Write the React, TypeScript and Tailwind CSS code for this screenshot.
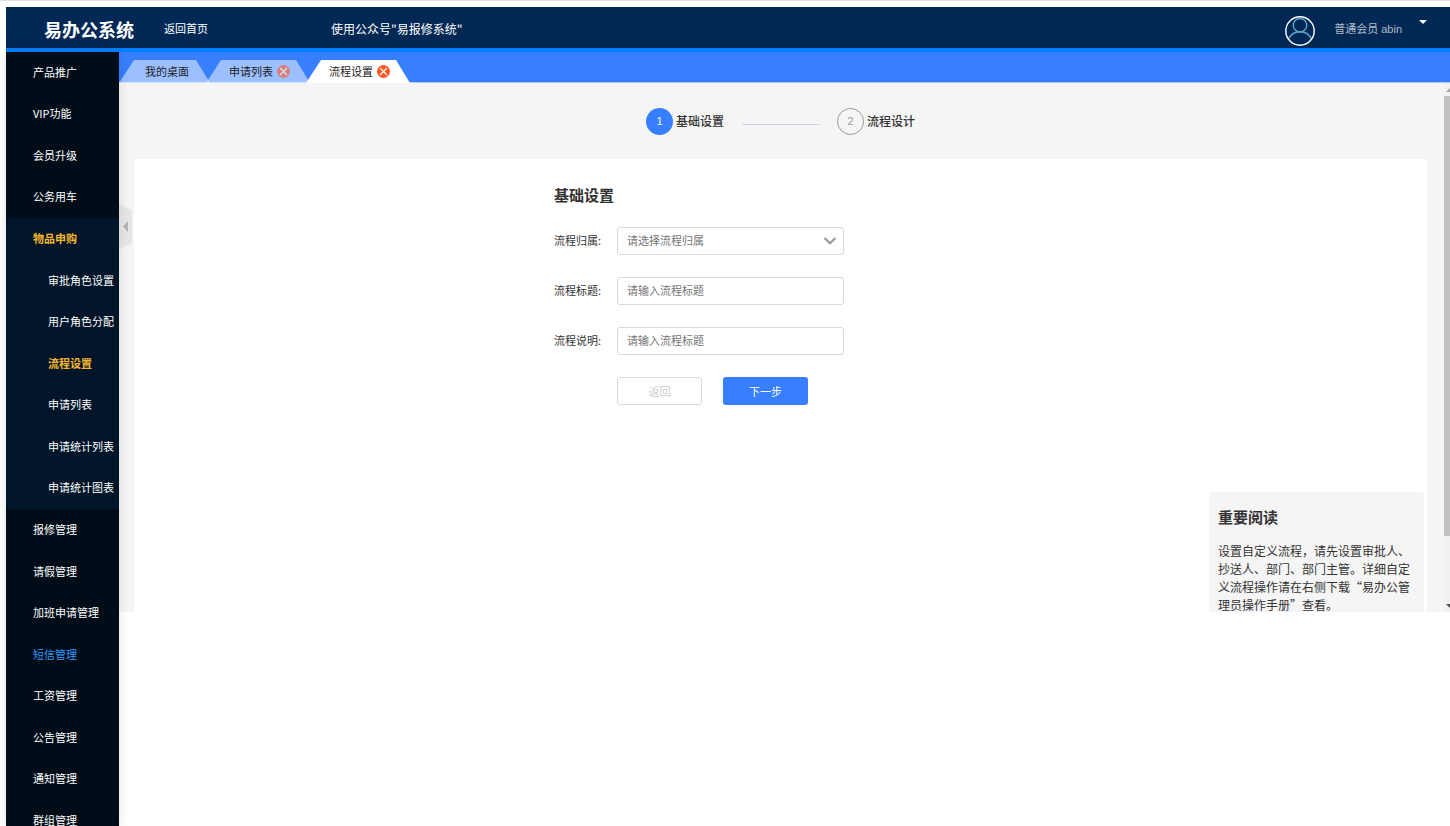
import { useState } from "react";
import clsx from "clsx";

interface MenuItem {
  label: string;
  highlight?: boolean;
  children?: string[];
}

const menu: MenuItem[] = [
  { label: "产品推广" },
  { label: "VIP功能" },
  { label: "会员升级" },
  { label: "公务用车" },
  {
    label: "物品申购",
    children: ["审批角色设置", "用户角色分配", "流程设置", "申请列表", "申请统计列表", "申请统计图表"],
  },
  { label: "报修管理" },
  { label: "请假管理" },
  { label: "加班申请管理" },
  { label: "短信管理", highlight: true },
  { label: "工资管理" },
  { label: "公告管理" },
  { label: "通知管理" },
  { label: "群组管理" },
];

const tabs = [
  { label: "我的桌面", closable: false },
  { label: "申请列表", closable: true },
  { label: "流程设置", closable: true },
];

export default function App() {
  return (
    <div className="h-screen overflow-hidden border-t border-[#dee1e6] bg-white pt-1.5 pl-1.5 font-['Noto_Sans_CJK_SC',sans-serif] text-[11px] text-[#333]">
      <Header />
      <div className="flex">
        <Sidebar />
        <main className="min-w-0 flex-1">
          <TabBar />
          <Workspace />
        </main>
      </div>
    </div>
  );
}

function Header() {
  return (
    <header className="flex h-[45px] items-center border-b-4 border-[#0080ff] bg-[#002855] pt-0.5 pl-[38px] text-white">
      <h1 className="text-lg font-bold">易办公系统</h1>
      <a href="#home" className="ml-[30px]">返回首页</a>
      <span className="ml-[123px] text-xs">使用公众号"易报修系统"</span>
      <div className="ml-auto flex h-full items-center pr-[23px]">
        <svg viewBox="0 0 30 30" className="mt-1 size-[30px]" fill="none">
          <circle cx="15" cy="9.300" r="6.800" stroke="#5fa8cf" strokeWidth="1.400" />
          <path d="M3.500 23.500C5.500 18.500 9.800 15.800 15 15.800s9.500 2.700 11.500 7.700" stroke="#5fa8cf" strokeWidth="1.400" />
          <circle cx="15" cy="15" r="14.200" stroke="#fff" strokeWidth="1.400" />
        </svg>
        <button className="flex h-full items-center gap-[17px]">
          <span className="ml-[19px] pt-0.5 font-['Liberation_Sans','Noto_Sans_CJK_SC',sans-serif] text-[#b3bdc8]">普通会员 abin</span>
          <svg viewBox="0 0 8 4" className="mb-3.5 h-1 w-2">
            <path d="M0 0h8L4 4z" fill="#fff" />
          </svg>
        </button>
      </div>
    </header>
  );
}

function Sidebar() {
  const [active, setActive] = useState("流程设置");

  return (
    <nav className="relative z-10 h-[calc(100vh-52px)] w-[113px] shrink-0 overflow-hidden bg-[#000c17] text-white shadow-[0_0_10px_rgba(0,0,0,0.12)]">
      <ul>
        {menu.map((item) =>
          item.children ? (
            <li key={item.label} className="bg-[#001529]">
              <a href="#menu" className="flex h-[42px] items-center pb-px pl-[27px] font-bold text-[#f7b52e]">
                {item.label}
              </a>
              <ul>
                {item.children.map((child) => (
                  <li key={child} className="h-[41px] even:h-[42px]">
                    <a
                      href="#menu"
                      onClick={() => setActive(child)}
                      className={clsx(
                        "flex h-full items-center pb-px pl-[42px] whitespace-nowrap",
                        child === active && "font-bold text-[#f7b52e]",
                      )}
                    >
                      {child}
                    </a>
                  </li>
                ))}
              </ul>
            </li>
          ) : (
            <li key={item.label} className="h-[41px] even:h-[42px]">
              <a
                href="#menu"
                className={clsx("flex h-full items-center pb-px pl-[27px]", item.highlight && "text-[#2e9bff]")}
              >
                {item.label}
              </a>
            </li>
          ),
        )}
      </ul>
    </nav>
  );
}

function TabBar() {
  const [current, setCurrent] = useState("流程设置");

  return (
    <div className="flex h-[31px] items-end border-b border-[#a9c7fb] bg-[#377fff] text-[#222]">
      {tabs.map((tab) => {
        const isCurrent = tab.label === current;
        return (
          <div
            key={tab.label}
            className={clsx(
              "-mb-px flex h-[23px] items-center gap-1 pb-px not-first:-ml-1 [clip-path:polygon(15px_0,calc(100%-14px)_0,100%_100%,0_100%)]",
              tab.closable ? "pr-[20px] pl-[23px]" : "pr-[21px] pl-[26px]",
              isCurrent ? "bg-white" : "bg-white/50",
            )}
          >
            <button onClick={() => setCurrent(tab.label)}>{tab.label}</button>
            {tab.closable && (
              <button aria-label="关闭" className={clsx(!isCurrent && "opacity-60")}>
                <svg viewBox="0 0 13 13" className="size-[13px]">
                  <circle cx="6.500" cy="6.500" r="6.500" fill="#ff5722" />
                  <path d="M3 3l7 7M10 3l-7 7" stroke="#fff" strokeWidth="1.200" />
                </svg>
              </button>
            )}
          </div>
        );
      })}
    </div>
  );
}

function Workspace() {
  return (
    <div className="relative flex h-[529px] overflow-hidden bg-[#f5f5f5]">
      <div className="flex min-w-0 flex-1 flex-col pr-[17px] pl-[15px]">
        <Steps />
        <section className="flex-1 rounded-t-sm bg-white pt-[25px]">
          <SettingsForm />
        </section>
      </div>
      <ScrollBar />

      <button aria-label="收起菜单" className="absolute top-[121px] left-0">
        <svg viewBox="0 0 13 45" className="h-[45px] w-[13px]">
          <path d="M0 0l13 6v33L0 45z" fill="#e6e6e6" />
          <path d="M9 17v11L4 22.500z" fill="#b3b3b3" />
        </svg>
      </button>

      <aside className="absolute right-[26px] bottom-0 h-[120px] w-[215px] overflow-hidden rounded-t bg-[#f5f5f5] px-[9px] pt-[13px]">
        <h2 className="text-[15px] leading-6 font-bold">重要阅读</h2>
        <p className="mt-[13px] text-xs leading-[18px]">
          设置自定义流程，请先设置审批人、抄送人、部门、部门主管。详细自定义流程操作请在右侧下载“易办公管理员操作手册”查看。
        </p>
      </aside>
    </div>
  );
}

function Steps() {
  return (
    <ol className="flex h-[76px] shrink-0 items-center justify-center text-xs font-medium">
      <li className="flex items-center gap-[3px]">
        <span className="flex size-[27px] items-center justify-center rounded-full bg-[#377fff] font-['Liberation_Sans',sans-serif] text-[11px] text-white">
          1
        </span>
        基础设置
      </li>
      <li aria-hidden="true" className="mx-[18px] mt-1.5 h-px w-[77px] bg-[#ccd6e6]" />
      <li className="flex items-center gap-[3px]">
        <span className="flex size-[27px] items-center justify-center rounded-full border border-[#999] font-['Liberation_Sans',sans-serif] text-[11px] font-normal text-[#999]">
          2
        </span>
        流程设计
      </li>
    </ol>
  );
}

const fieldCls =
  "h-7 w-[227px] rounded-[3px] border border-[#d9d9d9] bg-white px-[9px] pb-0.5 text-[11px] text-[#757575] outline-none placeholder:text-[#757575] focus:border-[#377fff]";

function SettingsForm() {
  return (
    <form className="mx-auto w-[453px]" onSubmit={(e) => e.preventDefault()}>
      <h2 className="text-[15px] leading-[22px] font-bold">基础设置</h2>

      <div className="mt-[21px] space-y-[22px]">
        <Field id="owner" label="流程归属:">
          <div className="relative">
            <select id="owner" className={`${fieldCls} appearance-none`}>
              <option>请选择流程归属</option>
            </select>
            <svg viewBox="0 0 14 8" className="pointer-events-none absolute top-2.5 right-[7px] h-2 w-3.5" fill="none">
              <path d="M1.500 1L7 6.300 12.500 1" stroke="#999" strokeWidth="2.200" />
            </svg>
          </div>
        </Field>
        <Field id="title" label="流程标题:">
          <input id="title" placeholder="请输入流程标题" className={fieldCls} />
        </Field>
        <Field id="desc" label="流程说明:">
          <input id="desc" placeholder="请输入流程标题" className={fieldCls} />
        </Field>
      </div>

      <div className="mt-[22px] flex gap-[21px] pl-[63px]">
        <button type="button" className="h-7 w-[85px] rounded-[3px] border border-[#d9d9d9] text-[#ccc]">
          返回
        </button>
        <button type="submit" className="h-7 w-[85px] rounded-[3px] bg-[#377fff] text-white">
          下一步
        </button>
      </div>
    </form>
  );
}

function Field({ id, label, children }: { id: string; label: string; children: React.ReactNode }) {
  return (
    <div className="flex items-center">
      <label htmlFor={id} className="w-[63px] shrink-0 pb-0.5">{label}</label>
      {children}
    </div>
  );
}

function ScrollBar() {
  return (
    <div className="flex w-1.5 shrink-0 flex-col items-end bg-[#f1f1f1]">
      <svg viewBox="0 0 4 13" className="h-[13px] w-1">
        <path d="M0 9l4-4v4z" fill="#a3a3a3" />
      </svg>
      <div className="h-[440px] w-full bg-[#c1c1c1]" />
      <svg viewBox="0 0 4 13" className="mt-auto h-[13px] w-1">
        <path d="M0 5h4v4z" fill="#505050" />
      </svg>
    </div>
  );
}
